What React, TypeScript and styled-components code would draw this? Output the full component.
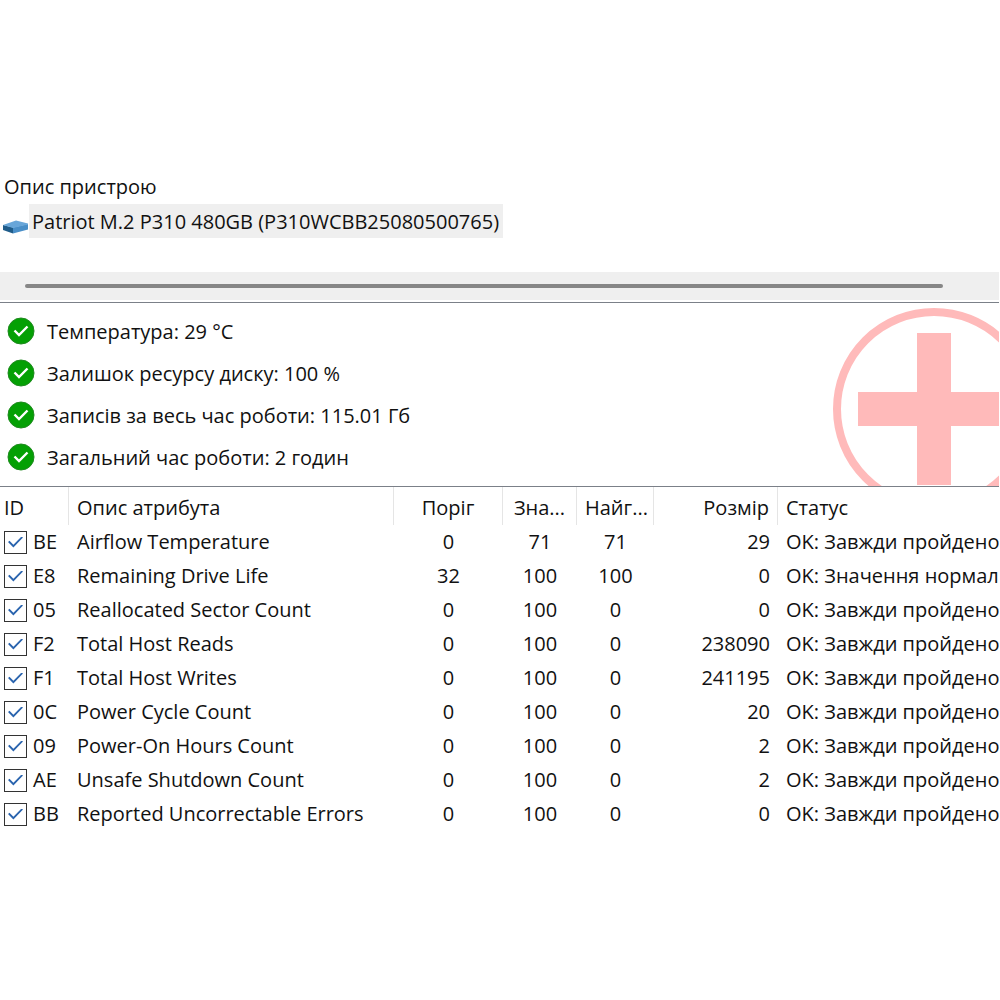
import React from "react";
import styled, { createGlobalStyle } from "styled-components";

const GlobalStyle = createGlobalStyle`
  * { box-sizing: border-box; }
  body {
    margin: 0;
    background: #fff;
    color: #111;
    font-family: "Open Sans", "Noto Sans", sans-serif;
    font-size: 20px;
    line-height: 34px;
  }
`;

const Page = styled.main`
  padding: 170px 1px 0 0;
  overflow: hidden;
`;

const DevicePane = styled.section`
  padding-bottom: 34px;
`;

const PaneTitle = styled.h1`
  margin: 0;
  padding-left: 4px;
  font-size: inherit;
  font-weight: 400;
`;

const Device = styled.div`
  display: flex;
  align-items: center;
  height: 34px;
`;

const DriveIcon = styled.svg`
  flex: none;
  width: 26px;
  height: 16px;
  margin: 10px 0 0 3px;
`;

const DeviceName = styled.button`
  height: 34px;
  padding: 2px 4px 0 3px;
  border: 0;
  background: #efefef;
  color: inherit;
  font: inherit;
  line-height: 32px;
  white-space: nowrap;
`;

const ScrollTrack = styled.div`
  display: flex;
  align-items: center;
  height: 30px;
  padding: 0 56px 0 25px;
  border-bottom: 2px solid #fff;
  background: #efefef;
`;

const ScrollThumb = styled.div`
  flex: 1;
  height: 4px;
  border-radius: 2px;
  background: #868686;
`;

const Summary = styled.section`
  position: relative;
  overflow: hidden;
  padding: 7px 0 8px;
  border-top: 1px solid #7b8088;
`;

const CheckList = styled.ul`
  margin: 0;
  padding: 0 0 0 7px;
  list-style: none;
`;

const CheckItem = styled.li`
  display: flex;
  align-items: center;
  gap: 12px;
  height: 42px;
`;

const CheckText = styled.span`
  padding-top: 2px;
`;

const StatusIcon = styled.svg`
  flex: none;
  width: 28px;
  height: 28px;
`;

const Emblem = styled.svg`
  position: absolute;
  top: 5px;
  right: -36px;
  width: 202px;
  height: 202px;
`;

const Attributes = styled.table`
  width: 100%;
  table-layout: fixed;
  border-collapse: separate;
  border-spacing: 0;
  border-top: 1px solid #7b8088;
`;

const Col = styled.col<{ $w?: number }>`
  width: ${(p) => (p.$w ? `${p.$w}px` : "auto")};
`;

type Align = "left" | "center" | "right";

const HeadCell = styled.th<{ $align?: Align; $first?: boolean }>`
  height: 38px;
  padding: 4px 8px 0 ${(p) => (p.$first ? 4 : 8)}px;
  border-right: 1px solid #e5e5e5;
  font-weight: 400;
  text-align: ${(p) => p.$align ?? "left"};
  white-space: nowrap;
  overflow: hidden;
  &:last-child { border-right: 0; }
`;

const Cell = styled.td<{ $align?: Align }>`
  height: 34px;
  padding: 0 8px;
  text-align: ${(p) => p.$align ?? "left"};
  white-space: nowrap;
  overflow: hidden;
`;

const IdCell = styled(Cell)`
  padding: 0 0 0 4px;
`;

const IdLabel = styled.label`
  display: flex;
  align-items: center;
  gap: 6px;
`;

const CheckBox = styled.input`
  appearance: none;
  flex: none;
  display: grid;
  place-items: center;
  width: 23px;
  height: 23px;
  margin: 0;
  border: 1px solid #333;
  background: #fff;
  &:checked::before {
    content: "";
    width: 15px;
    height: 11px;
    background: #2a64ae;
    clip-path: polygon(0 50%, 10% 38%, 36% 74%, 90% 0, 100% 10%, 36% 100%);
  }
`;

const checks = [
  "Температура: 29 °C",
  "Залишок ресурсу диску: 100 %",
  "Записів за весь час роботи: 115.01 Гб",
  "Загальний час роботи: 2 годин",
];

const passed = "OK: Завжди пройдено";

const rows = [
  ["BE", "Airflow Temperature", "0", "71", "71", "29", passed],
  ["E8", "Remaining Drive Life", "32", "100", "100", "0", "OK: Значення нормал"],
  ["05", "Reallocated Sector Count", "0", "100", "0", "0", passed],
  ["F2", "Total Host Reads", "0", "100", "0", "238090", passed],
  ["F1", "Total Host Writes", "0", "100", "0", "241195", passed],
  ["0C", "Power Cycle Count", "0", "100", "0", "20", passed],
  ["09", "Power-On Hours Count", "0", "100", "0", "2", passed],
  ["AE", "Unsafe Shutdown Count", "0", "100", "0", "2", passed],
  ["BB", "Reported Uncorrectable Errors", "0", "100", "0", "0", passed],
];

export default function App() {
  return (
    <>
      <GlobalStyle />
      <Page>
        <DevicePane>
          <PaneTitle>Опис пристрою</PaneTitle>
          <Device>
            <DriveIcon viewBox="0 0 26 16" aria-hidden="true">
              <path d="M0 7 10 9.500v6L0 12Z" fill="#1f5c8a" />
              <path d="M10 9.500 25 6v5.500L10 15.500Z" fill="#4a8fc8" />
              <path d="M0 7 13 2.500 25 5.500v1L10 10Z" fill="#68a6d9" />
            </DriveIcon>
            <DeviceName type="button">Patriot M.2 P310 480GB (P310WCBB25080500765)</DeviceName>
          </Device>
        </DevicePane>
        <ScrollTrack>
          <ScrollThumb />
        </ScrollTrack>
        <Summary>
          <Emblem viewBox="0 0 202 202" aria-hidden="true">
            <circle cx="101" cy="101" r="97" fill="none" stroke="#ffbaba" strokeWidth="8" />
            <path d="M84 25h34v59h59v34h-59v59H84v-59H25V84h59Z" fill="#ffbaba" />
          </Emblem>
          <CheckList>
            {checks.map((text) => (
              <CheckItem key={text}>
                <StatusIcon viewBox="0 0 28 28" aria-hidden="true">
                  <circle cx="14" cy="14" r="13" fill="#04a004" stroke="#1f8a1f" strokeWidth="1" />
                  <path d="m7.500 13.500 4.500 4.500 8.500-8.500" fill="none" stroke="#fff" strokeWidth="2.400" />
                </StatusIcon>
                <CheckText>{text}</CheckText>
              </CheckItem>
            ))}
          </CheckList>
        </Summary>
        <Attributes>
          <colgroup>
            <Col $w={69} />
            <Col $w={325} />
            <Col $w={109} />
            <Col $w={74} />
            <Col $w={77} />
            <Col $w={124} />
            <Col />
          </colgroup>
          <thead>
            <tr>
              <HeadCell $first>ID</HeadCell>
              <HeadCell>Опис атрибута</HeadCell>
              <HeadCell $align="center">Поріг</HeadCell>
              <HeadCell $align="center">Зна...</HeadCell>
              <HeadCell $align="center">Найг...</HeadCell>
              <HeadCell $align="right">Розмір</HeadCell>
              <HeadCell>Статус</HeadCell>
            </tr>
          </thead>
          <tbody>
            {rows.map(([id, name, threshold, value, worst, raw, status]) => (
              <tr key={id}>
                <IdCell>
                  <IdLabel>
                    <CheckBox type="checkbox" defaultChecked />
                    {id}
                  </IdLabel>
                </IdCell>
                <Cell>{name}</Cell>
                <Cell $align="center">{threshold}</Cell>
                <Cell $align="center">{value}</Cell>
                <Cell $align="center">{worst}</Cell>
                <Cell $align="right">{raw}</Cell>
                <Cell>{status}</Cell>
              </tr>
            ))}
          </tbody>
        </Attributes>
      </Page>
    </>
  );
}
